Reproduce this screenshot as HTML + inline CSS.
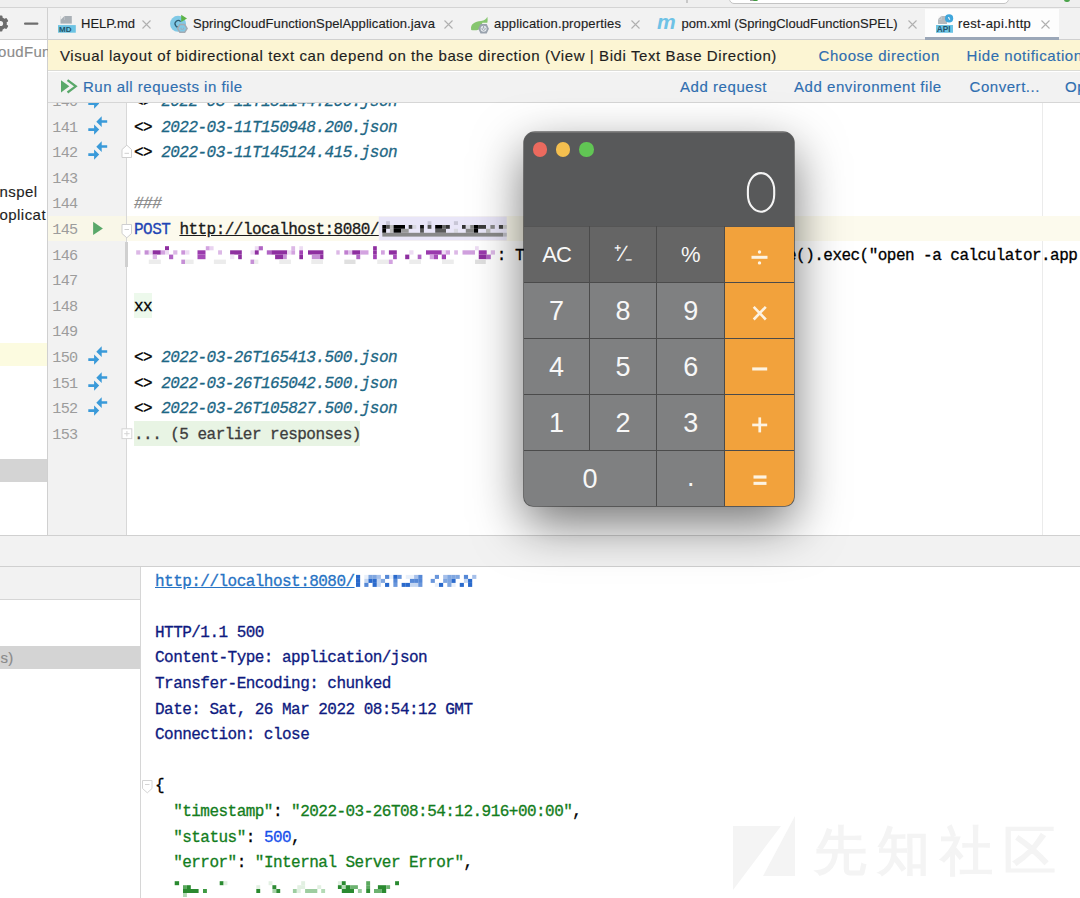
<!DOCTYPE html>
<html><head><meta charset="utf-8"><style>
*{box-sizing:border-box}
html,body{margin:0;padding:0}
body{width:1080px;height:898px;position:relative;overflow:hidden;background:#fff;font-family:"Liberation Sans",sans-serif}
.ab{position:absolute}
.s13{font-size:13px;color:#1e1e1e;-webkit-text-stroke:0.15px currentColor;white-space:pre;line-height:16px}
.s15{font-size:15px;-webkit-text-stroke:0.15px currentColor;white-space:pre;line-height:18px;letter-spacing:0.55px}
.m{font-family:"Liberation Mono",monospace;font-size:16px;letter-spacing:-0.53px;-webkit-text-stroke:0.3px currentColor;white-space:pre;line-height:25.6px;height:25.6px}
.ln{font-family:"Liberation Mono",monospace;font-size:15.2px;letter-spacing:-0.75px;white-space:pre;line-height:25.6px;color:#9c9c9c;text-align:right;width:40px}
.lnk{color:#2f6eb0}
.it{font-style:italic;color:#1d6785}
.nv{color:#0e1a80}
.gr{color:#137d20}
.bl{color:#1750eb}
.cb{color:#ececec}
</style></head><body>

<div class="ab" style="left:0;top:0;width:1080px;height:8px;background:#efefef"></div>
<div class="ab" style="left:0;top:7px;width:1080px;height:1px;background:#d4d4d4"></div>
<div class="ab" style="left:686px;top:0;width:2px;height:3px;background:#c8c8c8"></div>
<div class="ab" style="left:729px;top:-12px;width:280px;height:16px;background:#fff;border:1px solid #c4c4c4;border-radius:5px"></div>
<div class="ab" style="left:1064px;top:-3px;width:6px;height:5px;background:#4aa34a;border-radius:3px"></div>
<div class="ab" style="left:750px;top:-2px;width:5px;height:3px;background:#9a9a9a"></div><div class="ab" style="left:753px;top:-2px;width:5px;height:3px;background:#3c9a3c;border-radius:2px"></div>
<div class="ab" style="left:0;top:8px;width:1080px;height:31px;background:#f2f2f2"></div>
<div class="ab" style="left:0;top:39px;width:1080px;height:1px;background:#d0d0d0"></div>
<div class="ab" style="left:47px;top:8px;width:1px;height:31px;background:#d0d0d0"></div>
<div class="ab" style="left:925px;top:8.5px;width:134px;height:31px;background:#fdfdfd"></div>
<div class="ab" style="left:925px;top:36.8px;width:134px;height:2.9px;background:#9ba7b8"></div>
<svg class="ab" style="left:0;top:0" width="47" height="39" viewBox="0 0 47 39">
<g fill="#6c6c6c"><circle cx="0.5" cy="23.5" r="6.3"/>
<rect x="-1.5" y="15.5" width="4" height="16" rx="1"/>
<rect x="-1.5" y="15.5" width="4" height="16" rx="1" transform="rotate(60 0.5 23.5)"/>
<rect x="-1.5" y="15.5" width="4" height="16" rx="1" transform="rotate(120 0.5 23.5)"/></g>
<circle cx="0.5" cy="23.5" r="2.6" fill="#f2f2f2"/>
<rect x="24" y="22.6" width="14.4" height="2.2" rx="1" fill="#6e6e6e"/>
</svg>
<div class="ab s13" style="left:81px;top:16px;letter-spacing:0px">HELP.md</div>
<div class="ab s13" style="left:193px;top:16px;letter-spacing:0.09px">SpringCloudFunctionSpelApplication.java</div>
<div class="ab s13" style="left:494px;top:16px;letter-spacing:0.16px">application.properties</div>
<div class="ab s13" style="left:681.5px;top:16px;letter-spacing:0px">pom.xml (SpringCloudFunctionSPEL)</div>
<div class="ab s13" style="left:958px;top:16px;letter-spacing:0.35px">rest-api.http</div>
<svg class="ab" style="left:142px;top:20px" width="9" height="9" viewBox="0 0 9 9"><path d="M0.5 0.5L8.5 8.5M8.5 0.5L0.5 8.5" stroke="#b0b0b0" stroke-width="1.1"/></svg>
<svg class="ab" style="left:444px;top:20px" width="9" height="9" viewBox="0 0 9 9"><path d="M0.5 0.5L8.5 8.5M8.5 0.5L0.5 8.5" stroke="#b0b0b0" stroke-width="1.1"/></svg>
<svg class="ab" style="left:631px;top:20px" width="9" height="9" viewBox="0 0 9 9"><path d="M0.5 0.5L8.5 8.5M8.5 0.5L0.5 8.5" stroke="#b0b0b0" stroke-width="1.1"/></svg>
<svg class="ab" style="left:908px;top:20px" width="9" height="9" viewBox="0 0 9 9"><path d="M0.5 0.5L8.5 8.5M8.5 0.5L0.5 8.5" stroke="#b0b0b0" stroke-width="1.1"/></svg>
<svg class="ab" style="left:1041px;top:20px" width="9" height="9" viewBox="0 0 9 9"><path d="M0.5 0.5L8.5 8.5M8.5 0.5L0.5 8.5" stroke="#b0b0b0" stroke-width="1.1"/></svg>
<svg class="ab" style="left:56px;top:13px" width="22" height="22" viewBox="0 0 22 22">
<path d="M4.5 3h11.3v7.6H4.5z" fill="#a9b0b6"/><path d="M4.5 3h4v4h-4z" fill="#f2f2f2"/><path d="M4.5 7L8.5 3v4z" fill="#a9b0b6"/>
<rect x="2" y="12.1" width="17.8" height="7.6" fill="#6cc3e3"/>
<text x="3" y="19" font-family="Liberation Sans" font-weight="bold" font-size="8" fill="#24536a">MD</text></svg>
<svg class="ab" style="left:166px;top:12px" width="26" height="24" viewBox="0 0 26 24">
<circle cx="12" cy="11.8" r="8" fill="#80c9e6"/>
<path d="M14.6 9.6A3.2 3.2 0 1 0 13.8 14.6" fill="none" stroke="#2f5c70" stroke-width="1.3"/>
<path d="M15.2 2.7L21 6.5L15.2 9.9z" fill="#5db346"/>
<path d="M13.9 12.5h4.8l2.4 3.9-2.4 3.9h-4.8l-2.4-3.9z" fill="#80c9e6" stroke="#a3abb3" stroke-width="1.5"/><path d="M15 15.6a1.4 1.4 0 1 0 2.6 0" fill="none" stroke="#a3abb3" stroke-width="0.9"/>
</svg>
<svg class="ab" style="left:467px;top:12px" width="26" height="24" viewBox="0 0 26 24">
<path d="M4.2 17.9C3 12 8 9.5 14 9c3.5-.4 5.5-2 6.3-4.2c.5 2.5 .4 4.4 0 6H15.5L11.5 17.8c-3 .8-6 .6-7.3 .1z" fill="#86c66f"/>
<path d="M13.5 12h6.2l2.2 4.7-2.2 4.7h-6.2l-2.2-4.7z" fill="#99a2ad"/><circle cx="16.6" cy="16.7" r="3" fill="#e8ecf0"/>
<path d="M15.3 15.8a1.6 1.6 0 1 0 2.6 0" fill="none" stroke="#99a2ad" stroke-width="1"/><path d="M16.6 14v2.5" stroke="#99a2ad" stroke-width="1"/>
</svg>
<div class="ab" style="left:657px;top:11px;font-family:Liberation Sans;font-weight:bold;font-style:italic;font-size:21px;color:#6ec2e6;line-height:21px;letter-spacing:-1px">m</div>
<svg class="ab" style="left:932px;top:10px" width="26" height="26" viewBox="0 0 26 26">
<path d="M6 6h9v8H6z" fill="#b5babe"/><path d="M6 5.7h3.6v3.6H6z" fill="#fafafa"/><path d="M6 9.3L9.6 5.7v3.6z" fill="#b5babe"/>
<circle cx="17.1" cy="8.4" r="4.1" fill="#3fa6dc"/><path d="M16.6 7 q0.3 2 1.5 2.6" stroke="#fff" stroke-width="1.1" fill="none"/>
<rect x="4" y="15" width="17" height="7.8" fill="#6cc3e3"/>
<text x="4.8" y="22" font-family="Liberation Sans" font-weight="bold" font-size="8.2" fill="#24536a">API</text></svg>
<div class="ab" style="left:47px;top:39px;width:1px;height:496px;background:#d0d0d0"></div>
<div class="ab s15" style="left:-2px;top:42.5px;color:#8c8c8c;letter-spacing:0.3px">oudFun</div>
<div class="ab s15" style="left:-0.5px;top:183px;color:#1e1e1e;letter-spacing:0.45px">nspel</div>
<div class="ab s15" style="left:-0.5px;top:206px;color:#1e1e1e;letter-spacing:0.45px">oplicat</div>
<div class="ab" style="left:0;top:343px;width:47px;height:23px;background:#fcfbe0"></div>
<div class="ab" style="left:0;top:459px;width:47px;height:23px;background:#d4d4d4"></div>
<div class="ab" style="left:48px;top:40px;width:1032px;height:30.5px;background:#fcf5d3"></div>
<div class="ab" style="left:48px;top:70.3px;width:1032px;height:1.2px;background:#dcdcd6"></div>
<div class="ab s15" style="left:60px;top:47px;color:#1e1e1e;letter-spacing:0.59px">Visual layout of bidirectional text can depend on the base direction (View | Bidi Text Base Direction)</div>
<div class="ab s15 lnk" style="left:818.5px;top:47px">Choose direction</div>
<div class="ab s15 lnk" style="left:966.5px;top:47px">Hide notification</div>
<div class="ab" style="left:48px;top:71.5px;width:1032px;height:30.5px;background:#f2f2f2"></div>
<svg class="ab" style="left:60px;top:79px" width="18" height="15" viewBox="0 0 18 15"><path d="M1 1.2L9.3 7.3L1 13.5z" fill="#59a869"/><path d="M7.5 1.2L15.8 7.3L7.5 13.5" fill="none" stroke="#59a869" stroke-width="2.2"/></svg>
<div class="ab s15 lnk" style="left:83px;top:78px;letter-spacing:0.5px">Run all requests in file</div>
<div class="ab s15 lnk" style="left:680px;top:78px">Add request</div>
<div class="ab s15 lnk" style="left:794px;top:78px">Add environment file</div>
<div class="ab s15 lnk" style="left:969.5px;top:78px">Convert...</div>
<div class="ab s15 lnk" style="left:1065px;top:78px">Op</div>
<div class="ab" style="left:48px;top:102px;width:79px;height:433px;background:#f2f2f2;overflow:hidden"></div>
<div class="ab" style="left:126px;top:102px;width:1px;height:433px;background:#d8d8d8"></div>
<div class="ab" style="left:1042px;top:102px;width:1px;height:433px;background:#ebebeb"></div>
<div class="ab" style="left:48px;top:216.0px;width:78px;height:25px;background:#f9f7e8"></div>
<div class="ab" style="left:127px;top:216.0px;width:953px;height:25px;background:#fcfaed"></div>
<div class="ab" style="left:134px;top:292.8px;width:18px;height:25px;background:#edf9ec"></div>
<div class="ab" style="left:134px;top:420.8px;width:226px;height:25px;background:#e8f4e4"></div>
<div class="ab" style="left:0;top:102px;width:1080px;height:433px;overflow:hidden">
<div class="ab ln" style="left:37.4px;top:-11.96px">140</div>
<div class="ab ln" style="left:37.4px;top:13.64px">141</div>
<div class="ab ln" style="left:37.4px;top:39.24px">142</div>
<div class="ab ln" style="left:37.4px;top:64.84px">143</div>
<div class="ab ln" style="left:37.4px;top:90.44px">144</div>
<div class="ab ln" style="left:37.4px;top:116.04px">145</div>
<div class="ab ln" style="left:37.4px;top:141.64px">146</div>
<div class="ab ln" style="left:37.4px;top:167.24px">147</div>
<div class="ab ln" style="left:37.4px;top:192.84px">148</div>
<div class="ab ln" style="left:37.4px;top:218.44px">149</div>
<div class="ab ln" style="left:37.4px;top:244.04px">150</div>
<div class="ab ln" style="left:37.4px;top:269.64px">151</div>
<div class="ab ln" style="left:37.4px;top:295.24px">152</div>
<div class="ab ln" style="left:37.4px;top:320.84px">153</div>
<div class="ab m" style="left:134px;top:-11.96px">&lt;&gt; <span class="it">2022-03-11T151144.200.json</span></div>
<div class="ab m" style="left:134px;top:13.64px">&lt;&gt; <span class="it">2022-03-11T150948.200.json</span></div>
<div class="ab m" style="left:134px;top:39.24px">&lt;&gt; <span class="it">2022-03-11T145124.415.json</span></div>
<div class="ab m" style="left:134px;top:90.44px"><span style="color:#8c8c8c;font-style:italic">###</span></div>
<div class="ab m" style="left:134px;top:116.04px"><span style="color:#1f45b5">POST</span> <span style="text-decoration:underline;color:#1a1a1a">http://localhost:8080/</span></div>
<div class="ab m" style="left:134px;top:141.64px">                                        : T</div>
<div class="ab m" style="left:787.04px;top:141.64px">e().exec("open -a calculator.app</div>
<div class="ab m" style="left:134px;top:192.84px">xx</div>
<div class="ab m" style="left:134px;top:244.04px">&lt;&gt; <span class="it">2022-03-26T165413.500.json</span></div>
<div class="ab m" style="left:134px;top:269.64px">&lt;&gt; <span class="it">2022-03-26T165042.500.json</span></div>
<div class="ab m" style="left:134px;top:295.24px">&lt;&gt; <span class="it">2022-03-26T105827.500.json</span></div>
<div class="ab m" style="left:134px;top:320.84px"><span style="color:#3d3d3d">... (5 earlier responses)</span></div>
<svg class="ab" style="left:86px;top:-14.0px" width="24" height="24" viewBox="86 0 24 24"><g fill="#3a9ad9"><path d="M96.3 7.7L101.7 2.3V6.2H107.2V8.8H101.7V12.9z"/><path d="M99.2 15.5L94.1 10.4V14.2H88.3V17H94.1V20.7z"/></g></svg>
<svg class="ab" style="left:86px;top:11.6px" width="24" height="24" viewBox="86 0 24 24"><g fill="#3a9ad9"><path d="M96.3 7.7L101.7 2.3V6.2H107.2V8.8H101.7V12.9z"/><path d="M99.2 15.5L94.1 10.4V14.2H88.3V17H94.1V20.7z"/></g></svg>
<svg class="ab" style="left:86px;top:37.2px" width="24" height="24" viewBox="86 0 24 24"><g fill="#3a9ad9"><path d="M96.3 7.7L101.7 2.3V6.2H107.2V8.8H101.7V12.9z"/><path d="M99.2 15.5L94.1 10.4V14.2H88.3V17H94.1V20.7z"/></g></svg>
<svg class="ab" style="left:86px;top:242.0px" width="24" height="24" viewBox="86 0 24 24"><g fill="#3a9ad9"><path d="M96.3 7.7L101.7 2.3V6.2H107.2V8.8H101.7V12.9z"/><path d="M99.2 15.5L94.1 10.4V14.2H88.3V17H94.1V20.7z"/></g></svg>
<svg class="ab" style="left:86px;top:267.6px" width="24" height="24" viewBox="86 0 24 24"><g fill="#3a9ad9"><path d="M96.3 7.7L101.7 2.3V6.2H107.2V8.8H101.7V12.9z"/><path d="M99.2 15.5L94.1 10.4V14.2H88.3V17H94.1V20.7z"/></g></svg>
<svg class="ab" style="left:86px;top:293.2px" width="24" height="24" viewBox="86 0 24 24"><g fill="#3a9ad9"><path d="M96.3 7.7L101.7 2.3V6.2H107.2V8.8H101.7V12.9z"/><path d="M99.2 15.5L94.1 10.4V14.2H88.3V17H94.1V20.7z"/></g></svg>
<svg class="ab" style="left:92px;top:114.0px" width="12" height="25" viewBox="92 0 12 25"><path d="M93.1 5.8L102.9 12.4L93.1 19z" fill="#59a869"/></svg>
<svg class="ab" style="left:120px;top:37.2px" width="14" height="25" viewBox="120 0 14 25"><path d="M122 18.5V10.5L126.8 6.2L131.5 10.5V18.5z" fill="#fff" stroke="#cfcfcf" stroke-width="1"/><path d="M124.5 14.3h4.5" stroke="#cfcfcf" stroke-width="1"/></svg>
<svg class="ab" style="left:120px;top:114.0px" width="14" height="25" viewBox="120 0 14 25"><path d="M122 8.5V17.5L126.8 21.8L131.5 17.5V8.5z" fill="#fff" stroke="#cfcfcf" stroke-width="1"/><path d="M124.5 13.5h4.5" stroke="#cfcfcf" stroke-width="1"/></svg>
<svg class="ab" style="left:120px;top:318.8px" width="14" height="25" viewBox="120 0 14 25"><rect x="122" y="7.8" width="9.8" height="9.8" fill="#fff" stroke="#d4d4d4" stroke-width="1"/><path d="M124.2 12.7h5.4M126.9 10v5.4" stroke="#d4d4d4" stroke-width="1"/></svg>
<div class="ab" style="left:125px;top:139.6px;width:3px;height:25px;background:#d0d0d0"></div>
</div>
<div class="ab" style="left:48px;top:101.5px;width:1032px;height:1px;background:#d6d6d6"></div>
<div class="ab" style="left:0;top:534.5px;width:1080px;height:1px;background:#d0d0d0"></div>
<div class="ab" style="left:0;top:535.5px;width:1080px;height:31px;background:#f2f2f2"></div>
<div class="ab" style="left:0;top:566px;width:1080px;height:1px;background:#d0d0d0"></div>
<div class="ab" style="left:0;top:567px;width:140px;height:32px;background:#f2f2f2"></div>
<div class="ab" style="left:0;top:598.5px;width:140px;height:1px;background:#d6d6d6"></div>
<div class="ab" style="left:140px;top:567px;width:1px;height:331px;background:#d6d6d6"></div>
<div class="ab" style="left:0;top:646px;width:140px;height:23px;background:#d4d4d4"></div>
<div class="ab s15" style="left:0.5px;top:649px;color:#8a8a8a;letter-spacing:0.3px">s)</div>
<div class="ab m" style="left:155px;top:569.54px"><span style="color:#2773c4;text-decoration:underline">http://localhost:8080/</span></div>
<div class="ab m" style="left:155px;top:620.74px"><span class="nv">HTTP/1.1 500</span></div>
<div class="ab m" style="left:155px;top:646.34px"><span class="nv">Content-Type: application/json</span></div>
<div class="ab m" style="left:155px;top:671.94px"><span class="nv">Transfer-Encoding: chunked</span></div>
<div class="ab m" style="left:155px;top:697.54px"><span class="nv">Date: Sat, 26 Mar 2022 08:54:12 GMT</span></div>
<div class="ab m" style="left:155px;top:723.14px"><span class="nv">Connection: close</span></div>
<div class="ab m" style="left:155px;top:774.34px">{</div>
<div class="ab m" style="left:155px;top:799.94px">  <span class="gr">"timestamp"</span>: <span class="gr">"2022-03-26T08:54:12.916+00:00"</span>,</div>
<div class="ab m" style="left:155px;top:825.54px">  <span class="gr">"status"</span>: <span class="bl">500</span>,</div>
<div class="ab m" style="left:155px;top:851.14px">  <span class="gr">"error"</span>: <span class="gr">"Internal Server Error"</span>,</div>
<svg class="ab" style="left:140px;top:772.4px" width="14" height="25" viewBox="140 0 14 25"><path d="M142.5 8.5V16.5L147.3 20.8L152 16.5V8.5z" fill="#fff" stroke="#d4d4d4" stroke-width="1"/><path d="M145 12.5h4.5" stroke="#d4d4d4" stroke-width="1"/></svg>
<svg class="ab" style="left:0;top:0" width="1080" height="898"><rect x="378.8" y="216.5" width="127.90" height="24.00" fill="#e9e6f8"/><rect x="386.1" y="221.2" width="3.80" height="3.80" fill="#c8c6d6"/><rect x="427.6" y="221.2" width="3.80" height="3.80" fill="#c8c6d6"/><rect x="453.9" y="221.2" width="4.10" height="3.80" fill="#c8c6d6"/><rect x="382.3" y="225" width="3.80" height="3.80" fill="#000"/><rect x="386.1" y="225" width="3.80" height="3.80" fill="#555"/><rect x="389.9" y="225" width="3.70" height="3.80" fill="#bbb"/><rect x="393.6" y="225" width="11.40" height="3.80" fill="#000"/><rect x="408.7" y="225" width="3.80" height="3.80" fill="#333"/><rect x="412.5" y="225" width="3.80" height="3.80" fill="#d8d8e0"/><rect x="420.1" y="225" width="3.80" height="3.80" fill="#111"/><rect x="427.6" y="225" width="3.80" height="3.80" fill="#555"/><rect x="435.2" y="225" width="6.80" height="3.80" fill="#000"/><rect x="442" y="225" width="4.00" height="3.80" fill="#666"/><rect x="446" y="225" width="3.80" height="3.80" fill="#333"/><rect x="462" y="225" width="3.80" height="3.80" fill="#333"/><rect x="465.8" y="225" width="4.40" height="3.80" fill="#d8d8e0"/><rect x="470.2" y="225" width="3.80" height="3.80" fill="#888"/><rect x="474" y="225" width="4.10" height="3.80" fill="#000"/><rect x="478.1" y="225" width="7.90" height="3.80" fill="#3a3a3a"/><rect x="490.4" y="225" width="4.40" height="3.80" fill="#888"/><rect x="498.9" y="225" width="4.10" height="3.80" fill="#444"/><rect x="503" y="225" width="3.80" height="3.80" fill="#ccc"/><rect x="382.3" y="228.8" width="3.80" height="4.00" fill="#000"/><rect x="389.9" y="228.8" width="3.70" height="4.00" fill="#bbb"/><rect x="393.6" y="228.8" width="7.60" height="4.00" fill="#000"/><rect x="401.2" y="228.8" width="7.50" height="4.00" fill="#999"/><rect x="420.1" y="228.8" width="3.80" height="4.00" fill="#555"/><rect x="435.2" y="228.8" width="10.80" height="4.00" fill="#5a5a5a"/><rect x="453.9" y="228.8" width="4.10" height="4.00" fill="#d8d8e0"/><rect x="465.8" y="228.8" width="8.20" height="4.00" fill="#888"/><rect x="474" y="228.8" width="4.10" height="4.00" fill="#000"/><rect x="486" y="228.8" width="4.40" height="4.00" fill="#bbb"/><rect x="382.3" y="232.8" width="120.70" height="3.80" fill="#8a8a8a"/><rect x="503" y="232.8" width="3.80" height="3.80" fill="#c0c0c8"/></svg>
<svg class="ab" style="left:0;top:0" width="1080" height="898"><rect x="165" y="246.2" width="4.00" height="4.10" fill="#8e2fa0"/><rect x="136.2" y="250.3" width="4.20" height="4.30" fill="#dcb8e6"/><rect x="144.6" y="250.3" width="4.20" height="4.30" fill="#c690d6"/><rect x="148.8" y="250.3" width="3.90" height="4.30" fill="#eddcf3"/><rect x="152.7" y="250.3" width="8.10" height="4.30" fill="#8e2fa0"/><rect x="160.8" y="250.3" width="4.20" height="4.30" fill="#d3a3e0"/><rect x="165" y="250.3" width="4.00" height="4.30" fill="#eddcf3"/><rect x="173.2" y="250.3" width="4.20" height="4.30" fill="#dcb8e6"/><rect x="181.3" y="250.3" width="3.80" height="4.30" fill="#cc95da"/><rect x="185.1" y="250.3" width="4.30" height="4.30" fill="#eddcf3"/><rect x="197.5" y="250.3" width="8.00" height="4.30" fill="#9a3aad"/><rect x="152.7" y="254.6" width="4.30" height="4.60" fill="#dcb8e6"/><rect x="169" y="254.6" width="4.20" height="4.60" fill="#b064c4"/><rect x="197.5" y="254.6" width="8.00" height="4.60" fill="#a64cb8"/><rect x="148.8" y="259.6" width="12.00" height="4.40" fill="#ececec"/><rect x="181.3" y="259.6" width="3.80" height="4.40" fill="#c690d6"/><rect x="185.1" y="259.6" width="8.50" height="4.40" fill="#ececec"/><rect x="205.8" y="246.2" width="3.90" height="4.10" fill="#d3a3e0"/><rect x="209.7" y="246.2" width="3.90" height="4.10" fill="#e9d3f0"/><rect x="254.8" y="246.2" width="3.90" height="4.10" fill="#eddcf3"/><rect x="258.7" y="246.2" width="4.20" height="4.10" fill="#b064c4"/><rect x="218.1" y="250.3" width="3.90" height="4.30" fill="#dcb8e6"/><rect x="230.1" y="250.3" width="11.70" height="4.30" fill="#8e2fa0"/><rect x="250.5" y="250.3" width="4.30" height="4.30" fill="#eddcf3"/><rect x="254.8" y="250.3" width="3.90" height="4.30" fill="#8e2fa0"/><rect x="266.8" y="250.3" width="4.50" height="4.30" fill="#b064c4"/><rect x="230.1" y="254.6" width="4.20" height="4.60" fill="#f0e4f5"/><rect x="238.2" y="254.6" width="3.60" height="4.60" fill="#8e2fa0"/><rect x="213.9" y="259.6" width="12.00" height="4.40" fill="#ececec"/><rect x="250.5" y="259.6" width="3.90" height="4.40" fill="#c690d6"/><rect x="254.4" y="259.6" width="3.90" height="4.40" fill="#ececec"/><rect x="291.3" y="246.2" width="3.80" height="4.10" fill="#dcb8e6"/><rect x="299.3" y="246.2" width="3.70" height="4.10" fill="#eddcf3"/><rect x="271.3" y="250.3" width="15.90" height="4.30" fill="#8e2fa0"/><rect x="287.2" y="250.3" width="4.10" height="4.30" fill="#eddcf3"/><rect x="291.3" y="250.3" width="3.80" height="4.30" fill="#d3a3e0"/><rect x="299.3" y="250.3" width="3.70" height="4.30" fill="#a243b5"/><rect x="308" y="250.3" width="15.40" height="4.30" fill="#8e2fa0"/><rect x="336.3" y="250.3" width="3.40" height="4.30" fill="#dcb8e6"/><rect x="344.3" y="250.3" width="3.70" height="4.30" fill="#c07fd0"/><rect x="348" y="250.3" width="4.20" height="4.30" fill="#e0c0ea"/><rect x="352.2" y="250.3" width="8.00" height="4.30" fill="#8e2fa0"/><rect x="275.1" y="254.6" width="7.90" height="4.60" fill="#8e2fa0"/><rect x="283" y="254.6" width="3.80" height="4.60" fill="#c690d6"/><rect x="299.3" y="254.6" width="3.70" height="4.60" fill="#8e2fa0"/><rect x="311.8" y="254.6" width="8.30" height="4.60" fill="#c690d6"/><rect x="320.1" y="254.6" width="3.30" height="4.60" fill="#8e2fa0"/><rect x="356.3" y="254.6" width="3.90" height="4.60" fill="#b064c4"/><rect x="279.3" y="259.6" width="11.60" height="4.40" fill="#ececec"/><rect x="311.3" y="259.6" width="11.70" height="4.40" fill="#ececec"/><rect x="344.3" y="259.6" width="11.20" height="4.40" fill="#e0e0e0"/><rect x="373.1" y="246.2" width="3.70" height="4.10" fill="#8e2fa0"/><rect x="360.2" y="250.3" width="8.30" height="4.30" fill="#d3a3e0"/><rect x="373.1" y="250.3" width="3.70" height="4.30" fill="#8e2fa0"/><rect x="381" y="250.3" width="3.75" height="4.30" fill="#d3a3e0"/><rect x="388.9" y="250.3" width="7.90" height="4.30" fill="#8e2fa0"/><rect x="409.3" y="250.3" width="4.20" height="4.30" fill="#eddcf3"/><rect x="426" y="250.3" width="15.80" height="4.30" fill="#9a3aad"/><rect x="441.8" y="250.3" width="4.20" height="4.30" fill="#eddcf3"/><rect x="373.1" y="254.6" width="3.70" height="4.60" fill="#a243b5"/><rect x="393.1" y="254.6" width="3.70" height="4.60" fill="#a64cb8"/><rect x="405.2" y="254.6" width="4.10" height="4.60" fill="#8e2fa0"/><rect x="417.7" y="254.6" width="3.70" height="4.60" fill="#b064c4"/><rect x="429.75" y="254.6" width="4.15" height="4.60" fill="#d3a3e0"/><rect x="433.9" y="254.6" width="4.10" height="4.60" fill="#a64cb8"/><rect x="441.8" y="254.6" width="4.20" height="4.60" fill="#8e2fa0"/><rect x="377.25" y="259.6" width="11.65" height="4.40" fill="#ececec"/><rect x="388.9" y="259.6" width="3.80" height="4.40" fill="#d3a3e0"/><rect x="409.3" y="259.6" width="11.70" height="4.40" fill="#ececec"/><rect x="475" y="246.2" width="3.75" height="4.10" fill="#eddcf3"/><rect x="442" y="250.3" width="3.80" height="4.30" fill="#efdff4"/><rect x="445.8" y="250.3" width="4.20" height="4.30" fill="#d3a3e0"/><rect x="454.2" y="250.3" width="3.70" height="4.30" fill="#dcb8e6"/><rect x="462.5" y="250.3" width="12.50" height="4.30" fill="#d0a0de"/><rect x="478.75" y="250.3" width="7.95" height="4.30" fill="#9a3aad"/><rect x="490.8" y="250.3" width="4.20" height="4.30" fill="#ddb9e7"/><rect x="442" y="254.6" width="3.80" height="4.60" fill="#a243b5"/><rect x="478.75" y="254.6" width="7.95" height="4.60" fill="#8e2fa0"/><rect x="486.7" y="254.6" width="4.10" height="4.60" fill="#b064c4"/><rect x="442" y="259.6" width="11.75" height="4.40" fill="#ececec"/><rect x="475" y="259.6" width="10.80" height="4.40" fill="#e0e0e0"/></svg>
<svg class="ab" style="left:0;top:0" width="1080" height="898"><rect x="356.00" y="574.9" width="4.15" height="4.00" fill="#2a6acc" fill-opacity="1.0"/><rect x="364.30" y="574.9" width="4.15" height="4.00" fill="#2a6acc" fill-opacity="0.1"/><rect x="368.45" y="574.9" width="4.15" height="4.00" fill="#2a6acc" fill-opacity="0.6"/><rect x="372.60" y="574.9" width="4.15" height="4.00" fill="#2a6acc" fill-opacity="0.6"/><rect x="376.75" y="574.9" width="4.15" height="4.00" fill="#2a6acc" fill-opacity="0.42"/><rect x="385.05" y="574.9" width="4.15" height="4.00" fill="#2a6acc" fill-opacity="0.8"/><rect x="389.20" y="574.9" width="4.15" height="4.00" fill="#2a6acc" fill-opacity="0.1"/><rect x="393.35" y="574.9" width="4.15" height="4.00" fill="#2a6acc" fill-opacity="1.0"/><rect x="397.50" y="574.9" width="4.15" height="4.00" fill="#2a6acc" fill-opacity="0.7"/><rect x="405.80" y="574.9" width="4.15" height="4.00" fill="#2a6acc" fill-opacity="0.1"/><rect x="409.95" y="574.9" width="4.15" height="4.00" fill="#2a6acc" fill-opacity="0.1"/><rect x="414.10" y="574.9" width="4.15" height="4.00" fill="#2a6acc" fill-opacity="0.42"/><rect x="418.25" y="574.9" width="4.15" height="4.00" fill="#2a6acc" fill-opacity="0.8"/><rect x="434.85" y="574.9" width="4.15" height="4.00" fill="#2a6acc" fill-opacity="0.7"/><rect x="443.15" y="574.9" width="4.15" height="4.00" fill="#2a6acc" fill-opacity="0.42"/><rect x="447.30" y="574.9" width="4.15" height="4.00" fill="#2a6acc" fill-opacity="0.6"/><rect x="451.45" y="574.9" width="4.15" height="4.00" fill="#2a6acc" fill-opacity="0.6"/><rect x="455.60" y="574.9" width="4.15" height="4.00" fill="#2a6acc" fill-opacity="0.6"/><rect x="463.90" y="574.9" width="4.15" height="4.00" fill="#2a6acc" fill-opacity="0.8"/><rect x="472.20" y="574.9" width="4.15" height="4.00" fill="#2a6acc" fill-opacity="0.42"/><rect x="356.00" y="578.9" width="4.15" height="4.00" fill="#2a6acc" fill-opacity="1.0"/><rect x="364.30" y="578.9" width="4.15" height="4.00" fill="#2a6acc" fill-opacity="0.28"/><rect x="368.45" y="578.9" width="4.15" height="4.00" fill="#2a6acc" fill-opacity="1.0"/><rect x="372.60" y="578.9" width="4.15" height="4.00" fill="#2a6acc" fill-opacity="1.0"/><rect x="376.75" y="578.9" width="4.15" height="4.00" fill="#2a6acc" fill-opacity="0.28"/><rect x="380.90" y="578.9" width="4.15" height="4.00" fill="#2a6acc" fill-opacity="0.6"/><rect x="393.35" y="578.9" width="4.15" height="4.00" fill="#2a6acc" fill-opacity="0.8"/><rect x="409.95" y="578.9" width="4.15" height="4.00" fill="#2a6acc" fill-opacity="0.8"/><rect x="414.10" y="578.9" width="4.15" height="4.00" fill="#2a6acc" fill-opacity="0.8"/><rect x="418.25" y="578.9" width="4.15" height="4.00" fill="#2a6acc" fill-opacity="0.8"/><rect x="430.70" y="578.9" width="4.15" height="4.00" fill="#2a6acc" fill-opacity="0.7"/><rect x="443.15" y="578.9" width="4.15" height="4.00" fill="#2a6acc" fill-opacity="0.6"/><rect x="447.30" y="578.9" width="4.15" height="4.00" fill="#2a6acc" fill-opacity="0.6"/><rect x="451.45" y="578.9" width="4.15" height="4.00" fill="#2a6acc" fill-opacity="1.0"/><rect x="463.90" y="578.9" width="4.15" height="4.00" fill="#2a6acc" fill-opacity="0.28"/><rect x="468.05" y="578.9" width="4.15" height="4.00" fill="#2a6acc" fill-opacity="1.0"/><rect x="356.00" y="582.9" width="4.15" height="4.00" fill="#2a6acc" fill-opacity="1.0"/><rect x="364.30" y="582.9" width="4.15" height="4.00" fill="#2a6acc" fill-opacity="0.8"/><rect x="372.60" y="582.9" width="4.15" height="4.00" fill="#2a6acc" fill-opacity="1.0"/><rect x="376.75" y="582.9" width="4.15" height="4.00" fill="#2a6acc" fill-opacity="0.28"/><rect x="385.05" y="582.9" width="4.15" height="4.00" fill="#2a6acc" fill-opacity="1.0"/><rect x="393.35" y="582.9" width="4.15" height="4.00" fill="#2a6acc" fill-opacity="0.7"/><rect x="401.65" y="582.9" width="4.15" height="4.00" fill="#2a6acc" fill-opacity="1.0"/><rect x="405.80" y="582.9" width="4.15" height="4.00" fill="#2a6acc" fill-opacity="1.0"/><rect x="409.95" y="582.9" width="4.15" height="4.00" fill="#2a6acc" fill-opacity="0.28"/><rect x="414.10" y="582.9" width="4.15" height="4.00" fill="#2a6acc" fill-opacity="0.28"/><rect x="418.25" y="582.9" width="4.15" height="4.00" fill="#2a6acc" fill-opacity="0.7"/><rect x="434.85" y="582.9" width="4.15" height="4.00" fill="#2a6acc" fill-opacity="0.1"/><rect x="439.00" y="582.9" width="4.15" height="4.00" fill="#2a6acc" fill-opacity="1.0"/><rect x="447.30" y="582.9" width="4.15" height="4.00" fill="#2a6acc" fill-opacity="0.6"/><rect x="451.45" y="582.9" width="4.15" height="4.00" fill="#2a6acc" fill-opacity="0.1"/><rect x="459.75" y="582.9" width="4.15" height="4.00" fill="#2a6acc" fill-opacity="1.0"/><rect x="468.05" y="582.9" width="4.15" height="4.00" fill="#2a6acc" fill-opacity="1.0"/></svg>
<svg class="ab" style="left:0;top:0" width="1080" height="898"><rect x="174.7" y="881.2" width="4.40" height="4.00" fill="#2a8a30"/><rect x="219.7" y="881.2" width="3.90" height="4.00" fill="#2a8a30"/><rect x="223.6" y="881.2" width="3.80" height="4.00" fill="#e2f0e2"/><rect x="268.6" y="881.2" width="3.80" height="4.00" fill="#e2f0e2"/><rect x="183" y="885.2" width="3.90" height="3.80" fill="#5aa85e"/><rect x="186.9" y="885.2" width="3.90" height="3.80" fill="#2a8a30"/><rect x="256.3" y="885.2" width="3.90" height="3.80" fill="#e2f0e2"/><rect x="272.4" y="885.2" width="3.90" height="3.80" fill="#2f8c35"/><rect x="183" y="889" width="15.60" height="4.00" fill="#2a8a30"/><rect x="203" y="889" width="3.90" height="4.00" fill="#3d9a42"/><rect x="256.3" y="889" width="3.90" height="4.00" fill="#2a8a30"/><rect x="272.4" y="889" width="3.90" height="4.00" fill="#a8d4aa"/><rect x="276.3" y="889" width="3.90" height="4.00" fill="#2f8c35"/><rect x="183" y="893" width="3.90" height="4.00" fill="#b3dab5"/><rect x="301.2" y="881.2" width="3.90" height="4.00" fill="#e2f0e2"/><rect x="337.9" y="881.2" width="3.90" height="4.00" fill="#e2f0e2"/><rect x="341.8" y="881.2" width="3.90" height="4.00" fill="#2a8a30"/><rect x="366.2" y="881.2" width="3.90" height="4.00" fill="#5aa85e"/><rect x="395.1" y="881.2" width="3.90" height="4.00" fill="#2a8a30"/><rect x="297.3" y="885.2" width="7.80" height="3.80" fill="#e2f0e2"/><rect x="317.3" y="885.2" width="3.90" height="3.80" fill="#e2f0e2"/><rect x="337.9" y="885.2" width="3.90" height="3.80" fill="#2a8a30"/><rect x="341.8" y="885.2" width="3.90" height="3.80" fill="#b3dab5"/><rect x="345.7" y="885.2" width="4.40" height="3.80" fill="#2a8a30"/><rect x="350.1" y="885.2" width="7.80" height="3.80" fill="#6cb270"/><rect x="366.2" y="885.2" width="3.90" height="3.80" fill="#5aa85e"/><rect x="377.9" y="885.2" width="8.30" height="3.80" fill="#2a8a30"/><rect x="386.2" y="885.2" width="3.90" height="3.80" fill="#6cb270"/><rect x="292.9" y="889" width="3.90" height="4.00" fill="#9dcda0"/><rect x="296.8" y="889" width="3.90" height="4.00" fill="#e2f0e2"/><rect x="305.1" y="889" width="12.20" height="4.00" fill="#9dcda0"/><rect x="321.2" y="889" width="3.90" height="4.00" fill="#b3dab5"/><rect x="341.8" y="889" width="12.20" height="4.00" fill="#2a8a30"/><rect x="357.9" y="889" width="3.90" height="4.00" fill="#9dcda0"/><rect x="366.2" y="889" width="3.90" height="4.00" fill="#2f8c35"/><rect x="374" y="889" width="7.80" height="4.00" fill="#6cb270"/><rect x="381.8" y="889" width="4.40" height="4.00" fill="#2a8a30"/></svg>
<svg class="ab" style="left:0;top:0" width="1080" height="898">
<g fill="#f4f4f4"><path d="M733 826H781L733 890z"/><path d="M795 816V876H763z"/></g>
<text x="814" y="869" font-family="Liberation Sans" font-size="53" letter-spacing="10" fill="#f4f4f4" stroke="#f4f4f4" stroke-width="1.5">先知社区</text></svg>
<div class="ab" style="left:523.5px;top:132.2px;width:270.3px;height:374.3px;border-radius:11px 11px 9px 9px;box-shadow:0 18px 50px rgba(0,0,0,0.55),0 0 0 0.8px rgba(0,0,0,0.55);overflow:hidden;background:#575859">
<div class="ab" style="left:0;top:0;width:100%;height:95px;background:#58595a;border-top:1px solid #707070"></div>
<div class="ab" style="left:9.3px;top:10.1px;width:14.4px;height:14.4px;border-radius:50%;background:#ec6a5e"></div>
<div class="ab" style="left:32.4px;top:10.1px;width:14.4px;height:14.4px;border-radius:50%;background:#f4bf4f"></div>
<div class="ab" style="left:55.9px;top:10.1px;width:14.4px;height:14.4px;border-radius:50%;background:#61c554"></div>
<svg class="ab" style="left:0;top:0" width="270.3" height="95"><rect x="223.9" y="41.1" width="26.3" height="38.6" rx="13.1" ry="17" fill="none" stroke="#f4f4f4" stroke-width="2.1"/></svg>
<div class="ab" style="left:0.0px;top:94.3px;width:66.1px;height:56.0px;background:#656565;color:#f7f7f7;font-size:22px;text-align:center;line-height:56.0px;letter-spacing:-1.1px"><span style="position:relative;left:0px;top:1px">AC</span></div>
<div class="ab" style="left:66.1px;top:94.3px;width:67.0px;height:56.0px;background:#656565;color:#f7f7f7;font-size:22px;text-align:center;line-height:56.0px;letter-spacing:0px"><span style="position:relative;left:0px;top:0px">⁺∕₋</span></div>
<div class="ab" style="left:133.1px;top:94.3px;width:68.3px;height:56.0px;background:#656565;color:#f7f7f7;font-size:22px;text-align:center;line-height:56.0px;letter-spacing:0px"><span style="position:relative;left:0px;top:1px">%</span></div>
<div class="ab" style="left:201.4px;top:94.3px;width:68.9px;height:56.0px;background:#f2a23c;color:#f7f7f7;font-size:28px;text-align:center;line-height:56.0px;letter-spacing:0px"><span style="position:relative;left:0px;top:0px"></span></div>
<div class="ab" style="left:0.0px;top:150.3px;width:66.1px;height:56.0px;background:#7f8081;color:#f7f7f7;font-size:27px;text-align:center;line-height:56.0px;letter-spacing:0px"><span style="position:relative;left:0px;top:1px">7</span></div>
<div class="ab" style="left:66.1px;top:150.3px;width:67.0px;height:56.0px;background:#7f8081;color:#f7f7f7;font-size:27px;text-align:center;line-height:56.0px;letter-spacing:0px"><span style="position:relative;left:0px;top:1px">8</span></div>
<div class="ab" style="left:133.1px;top:150.3px;width:68.3px;height:56.0px;background:#7f8081;color:#f7f7f7;font-size:27px;text-align:center;line-height:56.0px;letter-spacing:0px"><span style="position:relative;left:0px;top:1px">9</span></div>
<div class="ab" style="left:0.0px;top:206.3px;width:66.1px;height:56.0px;background:#7f8081;color:#f7f7f7;font-size:27px;text-align:center;line-height:56.0px;letter-spacing:0px"><span style="position:relative;left:0px;top:1px">4</span></div>
<div class="ab" style="left:66.1px;top:206.3px;width:67.0px;height:56.0px;background:#7f8081;color:#f7f7f7;font-size:27px;text-align:center;line-height:56.0px;letter-spacing:0px"><span style="position:relative;left:0px;top:1px">5</span></div>
<div class="ab" style="left:133.1px;top:206.3px;width:68.3px;height:56.0px;background:#7f8081;color:#f7f7f7;font-size:27px;text-align:center;line-height:56.0px;letter-spacing:0px"><span style="position:relative;left:0px;top:1px">6</span></div>
<div class="ab" style="left:0.0px;top:262.3px;width:66.1px;height:56.0px;background:#7f8081;color:#f7f7f7;font-size:27px;text-align:center;line-height:56.0px;letter-spacing:0px"><span style="position:relative;left:0px;top:1px">1</span></div>
<div class="ab" style="left:66.1px;top:262.3px;width:67.0px;height:56.0px;background:#7f8081;color:#f7f7f7;font-size:27px;text-align:center;line-height:56.0px;letter-spacing:0px"><span style="position:relative;left:0px;top:1px">2</span></div>
<div class="ab" style="left:133.1px;top:262.3px;width:68.3px;height:56.0px;background:#7f8081;color:#f7f7f7;font-size:27px;text-align:center;line-height:56.0px;letter-spacing:0px"><span style="position:relative;left:0px;top:1px">3</span></div>
<div class="ab" style="left:201.4px;top:150.3px;width:68.9px;height:56.0px;background:#f2a23c;color:#f7f7f7;font-size:28px;text-align:center;line-height:56.0px;letter-spacing:0px"><span style="position:relative;left:0px;top:0px"></span></div>
<div class="ab" style="left:201.4px;top:206.3px;width:68.9px;height:56.0px;background:#f2a23c;color:#f7f7f7;font-size:28px;text-align:center;line-height:56.0px;letter-spacing:0px"><span style="position:relative;left:0px;top:0px"></span></div>
<div class="ab" style="left:201.4px;top:262.3px;width:68.9px;height:56.0px;background:#f2a23c;color:#f7f7f7;font-size:28px;text-align:center;line-height:56.0px;letter-spacing:0px"><span style="position:relative;left:0px;top:0px"></span></div>
<div class="ab" style="left:0.0px;top:318.3px;width:133.1px;height:56.0px;background:#7f8081;color:#f7f7f7;font-size:27px;text-align:center;line-height:56.0px;letter-spacing:0px"><span style="position:relative;left:0px;top:1px">0</span></div>
<div class="ab" style="left:133.1px;top:318.3px;width:68.3px;height:56.0px;background:#7f8081;color:#f7f7f7;font-size:27px;text-align:center;line-height:56.0px;letter-spacing:0px"><span style="position:relative;left:0px;top:-1px">.</span></div>
<div class="ab" style="left:201.4px;top:318.3px;width:68.9px;height:56.0px;background:#f2a23c;color:#f7f7f7;font-size:28px;text-align:center;line-height:56.0px;letter-spacing:0px"><span style="position:relative;left:0px;top:0px"></span></div>
<svg class="ab" style="left:0;top:0" width="270.3" height="374.3" viewBox="523.5 132.2 270.3 374.3"><g fill="#fdf3e2"><rect x="751" y="256" width="16" height="3"/><circle cx="759" cy="252.2" r="1.7"/><circle cx="759" cy="263.1" r="1.7"/><rect x="751.7" y="367.6" width="15" height="3.1"/><rect x="751.7" y="423.8" width="15" height="2.7"/><rect x="757.9" y="417.6" width="2.7" height="15"/><rect x="753" y="475.6" width="13" height="3.2"/><rect x="753" y="482" width="13" height="3.1"/></g><path d="M753.2 307L765.3 319.7M765.3 307L753.2 319.7" stroke="#fdf3e2" stroke-width="2.6"/></svg>
<div class="ab" style="left:0;top:149.8px;width:270.3px;height:1px;background:#4b4b4b"></div>
<div class="ab" style="left:0;top:205.8px;width:270.3px;height:1px;background:#4b4b4b"></div>
<div class="ab" style="left:0;top:261.8px;width:270.3px;height:1px;background:#4b4b4b"></div>
<div class="ab" style="left:0;top:317.8px;width:270.3px;height:1px;background:#4b4b4b"></div>
<div class="ab" style="left:0;top:93.8px;width:270.3px;height:1px;background:#555"></div>
<div class="ab" style="left:65.6px;top:94.3px;width:1px;height:224.0px;background:#4b4b4b"></div>
<div class="ab" style="left:132.6px;top:94.3px;width:1px;height:280.0px;background:#4b4b4b"></div>
<div class="ab" style="left:200.9px;top:94.3px;width:1px;height:280.0px;background:#4b4b4b"></div>
</div>
</body></html>
